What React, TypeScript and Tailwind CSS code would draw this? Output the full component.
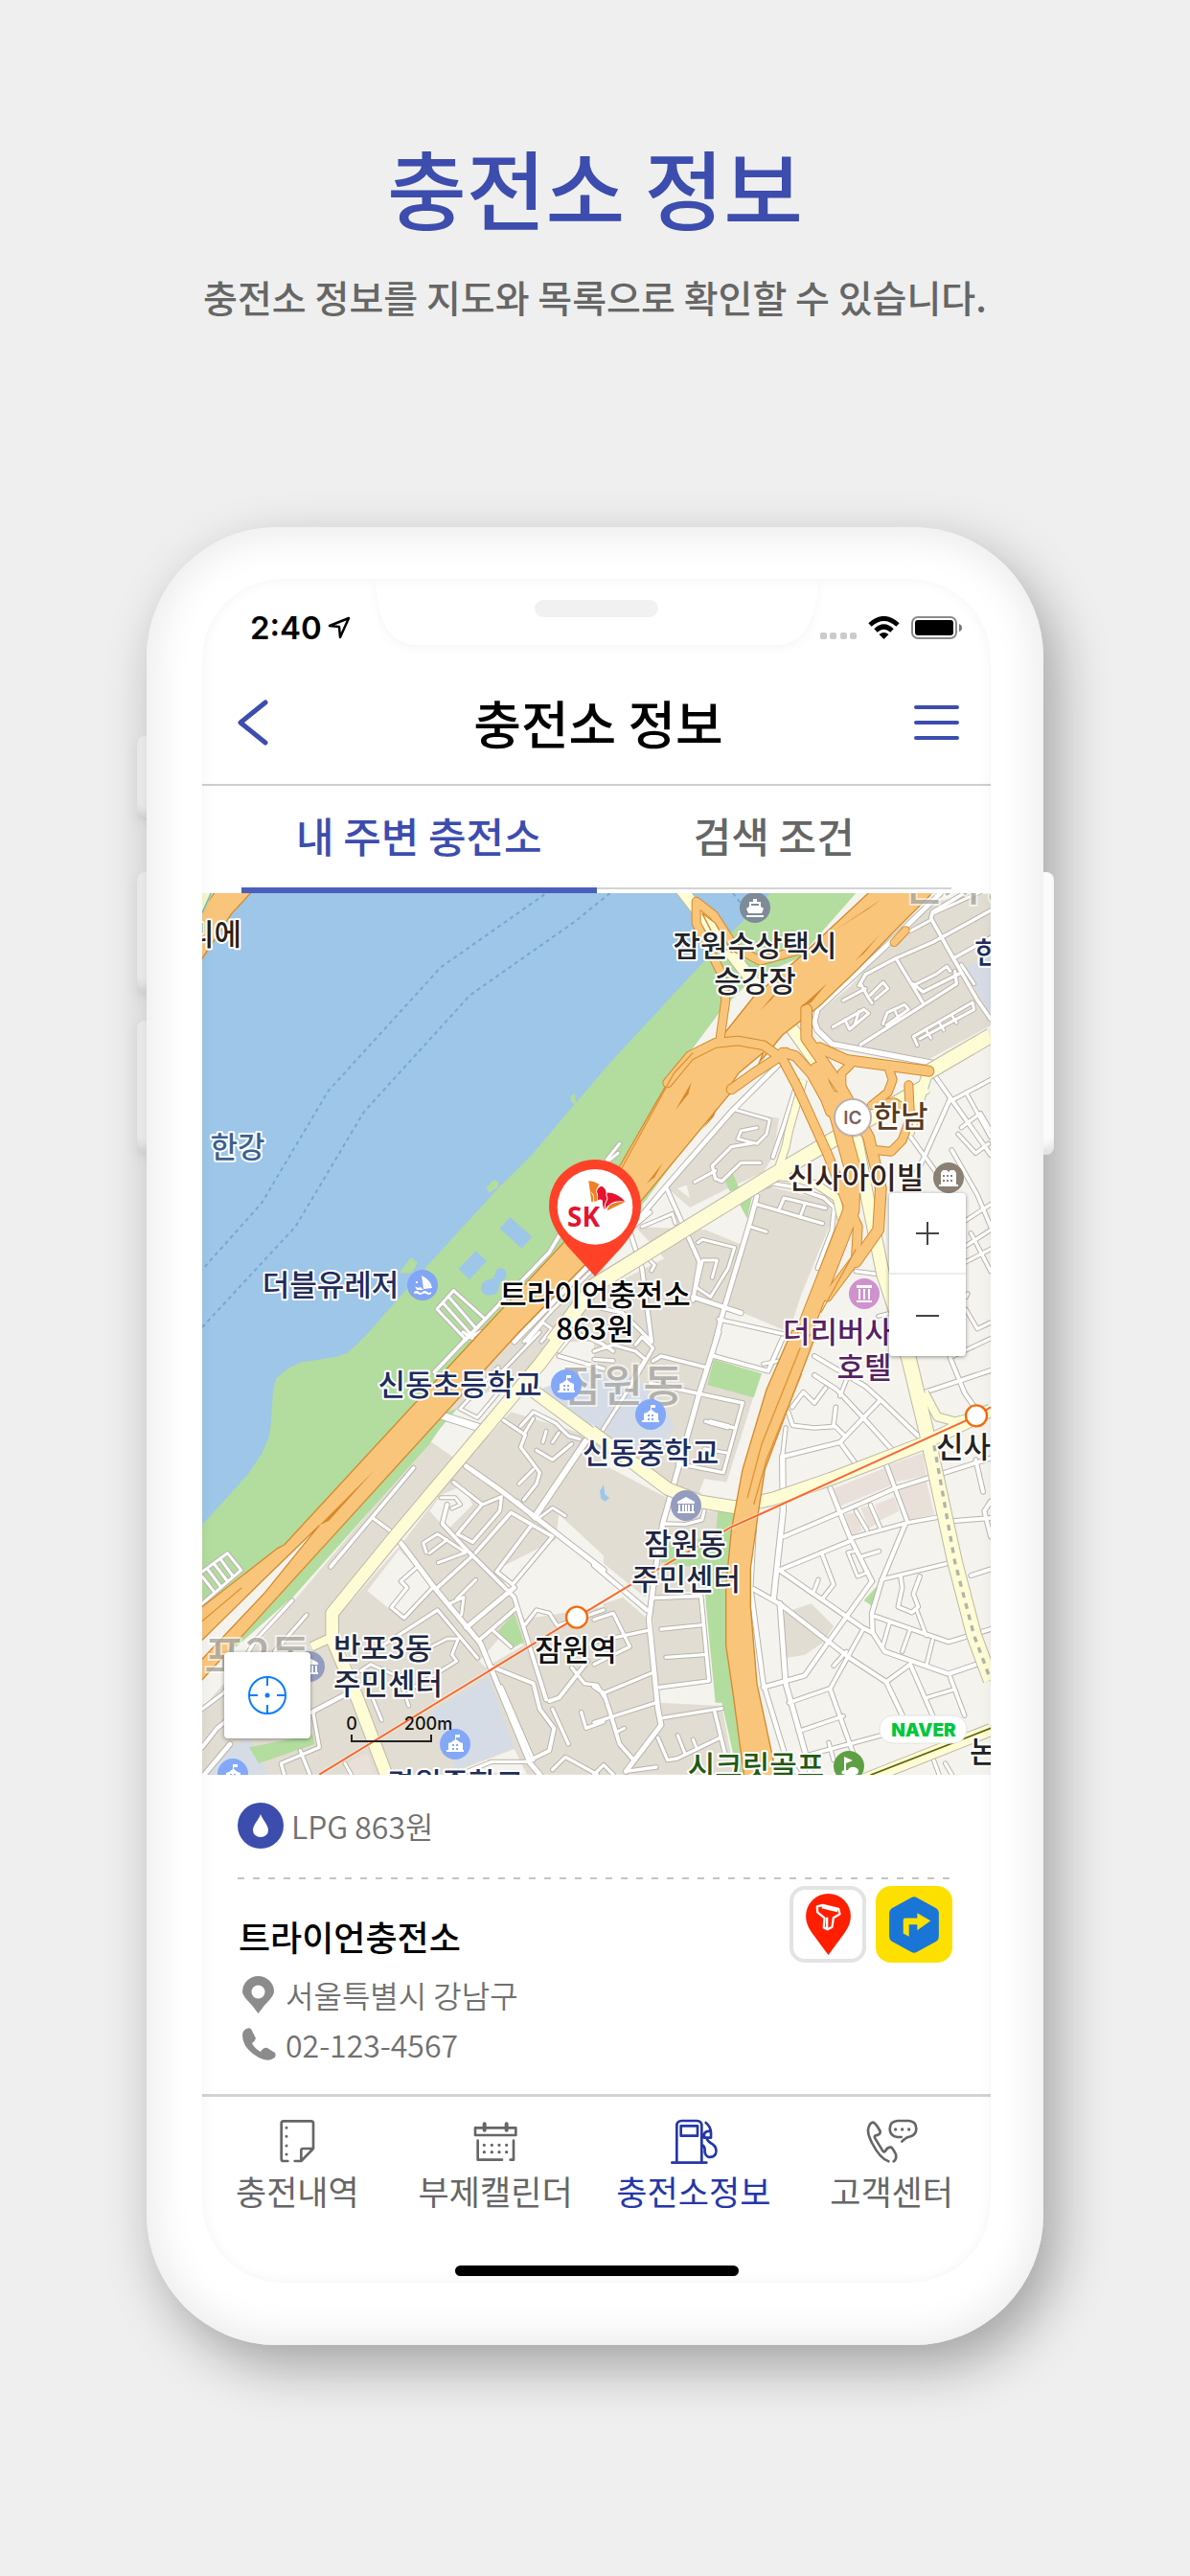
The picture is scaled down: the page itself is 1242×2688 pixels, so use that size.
import type { ReactNode } from 'react'

type Road = [points: string, width: number]

// The map sheet is drawn in four tiles, three units to a pixel.
const TILES = { nw: [0, 0], ne: [1260, 0], sw: [0, 1410], se: [1260, 1410] } as const
type Tile = keyof typeof TILES

const blocks: Record<Tile, string[]> = {
  nw: ['1225,1210 1290,1150 1290,1440 1000,1440'],
  ne: [
    '980,130 1080,60 1242,36 1242,450 1050,555 750,500 695,450 690,420 800,330',
    '440,720 580,740 560,860 530,910 420,960 300,1020 230,960',
    '130,1080 350,1090 460,1135 370,1440 0,1440 0,1290 220,1180',
    '530,950 740,1000 740,1070 650,1290 610,1410 420,1330 490,1050',
  ],
  sw: [
    '745,340 830,400 640,620 420,880 420,950 300,1030 150,1180 33,1260 33,1180 330,830',
    '1025,0 1200,0 1090,100 830,240 800,250',
    '860,400 1000,250 1230,320 1290,330 1290,1385 620,1385 450,900 660,660',
    '33,1180 430,950 620,1385 33,1385',
  ],
  se: [
    '0,0 390,0 370,90 520,130 500,200 415,470 345,460 330,520 230,520 160,440 0,300',
    '0,400 230,520 200,720 160,830 0,700',
    '180,830 340,830 360,1090 200,1120',
    '200,600 300,590 350,560 400,560 380,800 180,830',
    '0,860 90,830 170,900 200,1160 400,1170 440,1385 0,1385',
    '590,880 680,850 750,920 720,970 660,1010 600,1020',
  ],
}

const patches: Record<Tile, string[]> = {
  nw: [],
  ne: ['260,960 290,950 300,990', '350,1090 470,1030 490,1060 460,1135'],
  sw: [
    '550,810 650,680 760,800 660,900',
    '745,560 780,510 850,480 880,540 800,620',
    '1150,570 1290,700 1290,860 1030,900 960,740 1140,650',
    '900,1030 980,940 1040,980 920,1050',
    '1100,90 1190,80 1290,120 1060,190',
    '830,1375 1010,1305 1050,1385',
  ],
  se: ['0,680 30,700 0,730', '345,460 415,470 440,520 330,500'],
}

const schools: Record<Tile, string[]> = {
  nw: [],
  ne: ['1160,270 1242,230 1242,420'],
  sw: ['1090,180 1290,100 1290,290 1230,290', '750,1190 930,1080 1010,1300 830,1370', '100,1310 180,1270 240,1385 50,1385'],
  se: ['0,140 130,140 255,290 200,370 50,350 0,300'],
}

const parks: Record<Tile, string[]> = {
  nw: [],
  ne: ['405,925 435,915 455,960 425,970', '450,1000 495,985 480,1055'],
  sw: [
    '800,265 785,290 745,350 310,838 290,830 780,270',
    '1010,880 1040,970 1005,990 960,935',
    '180,1300 380,1260 385,1290 210,1350',
  ],
  se: [
    '375,85 525,130 500,205 355,165',
    '388,560 450,570 430,780 430,980 440,1130 500,1385 450,1385 400,1160 380,1160 350,850 345,740 210,720 230,660 380,640',
    '845,840 895,785 875,860',
  ],
}

const malls = [
  '750,490 910,425 930,480 770,545',
  '925,415 1030,378 1040,450 940,470',
  '785,570 820,565 840,620 805,640',
  '835,550 860,545 885,600 860,615',
  '880,540 940,515 955,560 895,590',
  '955,490 1040,465 1065,570 980,590',
]

const streets: Record<Tile, Road[]> = {
  nw: [
    ['820,1280 768,1338 860,1435', 9],
    ['820,1280 920,1370', 9],
    ['804,1298 892,1400', 9],
    ['786,1318 876,1418', 9],
    ['1150,1110 1120,1160 900,1390 850,1440', 11],
    ['1235,1210 1010,1440', 14],
    ['1260,1210 1130,1340 1040,1440', 9],
    ['1050,1440 1100,1380 1128,1400 1095,1440', 9],
  ],
  ne: [
    ['690,440 700,465 745,508 1060,568', 16],
    ['690,440 700,400 830,280 900,215 1085,36', 14],
    ['40,870 80,820', 9],
    ['0,910 75,850', 9],
    ['990,155 1055,120', 9],
    ['1160,36 1060,95 1055,115 1125,240 1200,370 1242,430', 11],
    ['1060,100 1242,18', 9],
    ['945,240 1030,380', 10],
    ['830,325 850,290 945,240 1060,190 1242,90', 10],
    ['1125,240 1242,175', 10],
    ['1000,320 1030,345 1150,285', 10],
    ['1010,320 1070,290 1105,265 1115,280', 9],
    ['780,372 850,335', 9],
    ['835,320 860,365 870,380', 9],
    ['1130,280 1135,320 1040,380 835,510', 10],
    ['1150,260 1190,320', 9],
    ['865,355 905,315 920,335 880,368', 9],
    ['748,455 845,400 860,412 800,462 785,432', 9],
    ['905,445 918,410 972,385 985,400 915,450', 9],
    ['830,405 815,450', 8],
    ['940,400 955,430', 8],
    ['1012,512 1000,485 1185,378 1190,400 1020,492', 9],
    ['1040,465 1055,490', 8],
    ['1080,440 1095,465', 8],
    ['1120,418 1135,442', 8],
    ['575,575 430,720 225,955 145,1050', 14],
    ['630,650 595,760 560,862', 11],
    ['445,715 550,745 540,790 510,820 450,805 460,780 510,770', 9],
    ['500,818 430,830 370,890 380,930 400,938 460,880 520,880', 10],
    ['315,940 380,905', 9],
    ['225,955 330,1190 310,1310', 12],
    ['325,1130 340,1120 440,1145 420,1210 365,1300 320,1270 340,1185 385,1185 370,1240', 9],
    ['175,1035 110,1090 150,1210 180,1440', 12],
    ['150,1080 245,1040', 9],
    ['245,1040 255,1070', 9],
    ['165,1175 190,1200 180,1218', 9],
    ['510,985 490,1060 400,1360 380,1440', 14],
    ['510,1010 715,1070', 10],
    ['580,1025 595,990 725,1022', 10],
    ['645,1050 660,1010', 9],
    ['490,1080 540,1096', 9],
    ['520,960 560,945 620,955 720,990 752,1020 745,1090 700,1210', 11],
    ['310,1300 460,1350', 14],
    ['390,1370 590,1415', 11],
    ['820,1220 900,1230', 10],
    ['1065,605 1242,855', 12],
    ['1115,680 1030,870 960,1010', 12],
    ['985,790 1075,915', 11],
    ['1110,690 1242,620', 11],
    ['1165,660 1242,800', 10],
    ['1150,770 1210,725 1242,780', 10],
    ['1140,790 1195,850 1235,820', 10],
    ['1120,840 1200,980 1242,1080', 11],
    ['1165,1140 1242,1090', 10],
    ['1165,1060 1242,1010', 10],
    ['1180,1100 1242,1220', 10],
    ['1165,1190 1242,1150', 10],
    ['1165,1340 1200,1400 1242,1380', 10],
    ['1165,1300 1170,1290', 10],
    ['0,1330 90,1350 180,1440', 10],
    ['890,1360 930,1350', 9],
  ],
  sw: [
    ['905,0 860,20 760,125', 11],
    ['850,0 880,20', 10],
    ['1090,0 975,120 940,150', 9],
    ['960,110 840,240 895,268 985,160', 9],
    ['1150,75 1290,115', 11],
    ['1150,60 1200,0 1290,40', 9],
    ['785,262 910,302', 22],
    ['695,425 435,735', 11],
    ['565,580 635,632', 10],
    ['860,420 960,490 1290,745', 15],
    ['655,660 760,800 905,975 1060,1350 1090,1385', 15],
    ['820,470 910,540 970,515 965,560 880,658 832,632 905,545', 10],
    ['780,518 825,518 842,540 815,552', 9],
    ['800,540 785,600 850,670 950,770 1010,830 1110,1150', 12],
    ['1120,1155 1150,1145 1240,1030', 12],
    ['890,690 1000,565 1130,640 1005,790 955,750 1060,610', 11],
    ['1080,570 1235,340', 18],
    ['1020,530 1075,585', 10],
    ['975,275 1045,322 1030,360 1090,440 1080,475 1040,525', 10],
    ['1025,475 1070,430', 9],
    ['1030,295 1070,250 1140,285 1180,325 1215,335', 10],
    ['1040,320 1070,270', 9],
    ['1080,370 1130,400 1190,350', 10],
    ['1110,310 1100,345', 9],
    ['1150,315 1130,345', 9],
    ['1090,580 1130,550 1170,575', 9],
    ['770,800 880,700', 11],
    ['700,740 655,780 675,800 625,862 665,895 755,800', 10],
    ['735,690 725,660 770,632 858,690 772,722', 9],
    ['745,692 800,650', 9],
    ['860,925 1010,800', 14],
    ['830,835 890,775', 9],
    ['808,850 852,830 845,885', 9],
    ['900,965 1015,865', 11],
    ['600,980 770,870 895,1020', 10],
    ['530,1060 560,1040 650,1080 680,1170', 9],
    ['740,990 800,960 835,960 815,1010 830,1030 700,1110', 9],
    ['945,1050 1070,1100 1090,1180 1135,1240 1120,1310 1050,1345', 12],
    ['970,1110 1070,1340', 10],
    ['1045,915 1080,870 1120,880 1145,920 1290,870', 10],
    ['945,935 1000,985', 10],
    ['1130,1180 1180,1290', 10],
    ['1220,1190 1235,1240 1290,1220', 10],
    ['1190,1050 1230,1100 1270,1105 1290,1140', 10],
    ['1130,1370 1170,1330 1270,1385', 10],
    ['840,1385 940,1345 1050,1345', 10],
    ['560,1130 595,1215', 9],
    ['315,840 200,965 100,1130 33,1180', 10],
    ['360,885 260,1000', 10],
    ['33,1300 80,1240 130,1200', 12],
    ['40,1385 120,1290', 14],
    ['375,1190 490,1130', 13],
    ['380,1190 400,1300 280,1350 290,1385', 10],
    ['340,1310 370,1385', 10],
    ['480,1350 500,1385', 9],
    ['33,750 112,692 155,745 33,850', 9],
    ['90,710 130,765', 9],
    ['70,725 112,780', 9],
    ['50,742 92,798', 9],
    ['33,765 72,815', 9],
  ],
  se: [
    ['0,60 60,40 130,60 160,85 120,150', 10],
    ['0,85 60,90', 10],
    ['0,20 60,60', 10],
    ['130,40 150,15 185,50 120,160 28,305', 10],
    ['185,90 210,75 350,110', 11],
    ['175,160 465,222', 11],
    ['375,75 545,122 590,20', 12],
    ['530,100 580,90', 9],
    ['390,0 330,190 260,440 215,600 190,760 172,900 200,1180 210,1230 100,1375', 15],
    ['465,222 405,440 262,412', 10],
    ['350,280 440,300', 11],
    ['365,282 418,296', 16],
    ['345,365 415,378', 9],
    ['345,560 338,588 285,602 225,600', 10],
    ['0,730 165,870', 13],
    ['210,930 340,917', 10],
    ['225,1018 345,1010', 10],
    ['185,832 335,826 360,1092 205,1112', 11],
    ['0,900 60,880 112,985 0,1040', 10],
    ['0,970 165,935', 10],
    ['0,1110 30,1130 50,1190 80,1290 120,1335', 12],
    ['30,1130 180,1068', 10],
    ['0,1222 195,1160', 10],
    ['75,1250 95,1240', 9],
    ['215,1208 400,1178', 10],
    ['378,1190 410,1320', 11],
    ['200,1270 230,1340 260,1335 395,1270', 10],
    ['262,1262 285,1320', 9],
    ['310,1275 320,1300', 9],
    ['100,1375 195,1362', 10],
    ['0,1385 30,1355 60,1385', 10],
    ['620,235 655,188 690,222 725,175', 11],
    ['690,135 760,180 840,265 930,365', 12],
    ['690,75 850,170 900,215 1020,330', 12],
    ['770,200 790,150', 10],
    ['608,250 622,292 690,300 755,295 785,325', 11],
    ['757,235 750,290', 11],
    ['590,390 770,345 895,215', 12],
    ['770,345 825,420', 12],
    ['600,300 590,390', 10],
    ['1030,190 1242,120', 12],
    ['1115,80 1160,190 1195,240', 12],
    ['1125,75 1242,20', 10],
    ['590,390 592,560 562,835', 16],
    ['595,640 770,565 940,490 1242,395', 12],
    ['740,490 800,640 870,780', 13],
    ['915,415 980,590', 12],
    ['820,560 855,620', 10],
    ['865,540 895,610', 10],
    ['805,645 980,597 1100,575', 11],
    ['580,745 800,655', 12],
    ['580,745 840,925 870,940', 13],
    ['500,805 580,850 800,1020 915,1095 970,1210', 13],
    ['975,600 900,780 870,880 872,940 910,1000 1110,1070 1242,1025', 13],
    ['900,775 1115,722', 11],
    ['870,780 730,975 660,1075 530,1112', 13],
    ['712,690 750,790 715,835', 11],
    ['685,820 702,775', 10],
    ['822,685 795,690 825,765 850,755', 9],
    ['840,702 892,686', 11],
    ['960,765 965,800 952,860 995,878 1015,860 1000,820 1020,765', 11],
    ['880,890 1110,970 1242,930', 12],
    ['925,910 905,980', 10],
    ['990,930 965,1000', 10],
    ['1060,965 1040,1045', 10],
    ['1010,870 1040,950', 10],
    ['582,850 600,1100 640,1240 680,1385', 15],
    ['500,620 490,800 530,1100 600,1330 640,1385', 13],
    ['610,1160 740,1115 840,935', 11],
    ['640,1250 780,1202', 11],
    ['740,1120 830,1370', 12],
    ['915,1095 990,1040 1060,1200', 12],
    ['750,1045 790,1000', 10],
    ['1115,1080 1160,1200', 11],
    ['1040,1145 1130,1118', 10],
    ['1120,592 1242,582', 12],
    ['1180,762 1242,742', 12],
    ['1195,400 1218,500', 12],
    ['1242,530 1222,560 1242,640', 12],
    ['650,1330 900,1262', 11],
    ['735,1285 750,1340', 10],
    ['1060,1330 1080,1385', 10],
    ['1100,1350 1120,1385', 10],
  ],
}

const avenues: Record<Tile, Road[]> = {
  nw: [],
  ne: [
    ['-130,1440 0,1265 290,1085 550,925 770,795 1040,640', 44],
    ['1040,600 1242,482', 44],
    ['1050,580 985,790', 30],
    ['655,620 610,780 600,830 570,920', 22],
    ['270,20 480,290 620,460 720,600 760,680', 36],
    ['560,920 640,930 700,950 760,990 775,1060', 22],
    ['820,800 860,1010 905,1230 975,1440', 38],
  ],
  sw: [
    ['1180,-20 1090,100 640,635 440,880 440,960 520,1150 615,1400', 38],
    ['1050,170 1260,325', 38],
    ['375,985 440,955', 26],
  ],
  se: [
    ['-10,310 110,400 230,490 330,530 440,548 560,522 740,460 1040,345 1242,245', 38],
    ['960,20 985,80 1045,330 1130,720 1190,950 1242,1090', 44],
    ['1035,190 1075,265 1130,280 1170,270', 24],
    ['850,1400 1242,1245', 36],
  ],
}

const ramps: Road[] = [
  ['395,490 412,370 400,290 320,130 320,62 375,105 440,205 520,248 640,215', 24],
  ['430,650 500,600 600,535', 28],
  ['590,535 630,545 680,600 725,680 740,720', 28],
  ['700,590 715,640 760,720 810,900 805,1030 770,1120 660,1400', 48],
  ['665,400 665,490 770,640 860,800 898,960 890,1090 820,1190', 32],
  ['705,520 790,558 1048,593', 30],
  ['800,575 775,600 775,650', 24],
  ['925,590 935,620 920,660 870,700', 24],
  ['985,637 990,740 965,810 930,845 880,840', 24],
  ['870,700 940,690 985,720', 22],
  ['940,190 975,153', 22],
  ['755,670 800,700', 24],
  ['230,630 300,545 380,505 450,498 530,512 590,555 635,640 730,850 790,1000 826,1080 820,1180 730,1300', 26],
]

const ink = '#1f2640'
const schoolInk = '#1d2d5e'

const labels: { text: string; x: number; y: number; fill: string; anchor?: 'start' | 'end' }[] = [
  { text: '잠원수상택시', x: 577, y: 66, fill: '#1f2328' },
  { text: '승강장', x: 577, y: 103, fill: '#1f2328' },
  { text: '리에', x: 41, y: 54, fill: '#2b1e14', anchor: 'end' },
  { text: '한강', x: 37, y: 276, fill: '#3a6190' },
  { text: '더블유레저', x: 134, y: 420, fill: '#222c5c' },
  { text: '한남', x: 729, y: 244, fill: '#5a3a1e' },
  { text: '신사아이빌', x: 682, y: 308, fill: '#33221a' },
  { text: '더리버사이드', x: 606, y: 469, fill: '#55215f', anchor: 'start' },
  { text: '호텔', x: 691, y: 506, fill: '#55215f' },
  { text: '한', x: 806, y: 73, fill: schoolInk, anchor: 'start' },
  { text: '신동초등학교', x: 269, y: 524, fill: schoolInk },
  { text: '신동중학교', x: 468, y: 595, fill: schoolInk },
  { text: '잠원동', x: 504, y: 690, fill: ink },
  { text: '주민센터', x: 505, y: 727, fill: ink },
  { text: '신사', x: 766, y: 589, fill: '#222222', anchor: 'start' },
  { text: '잠원역', x: 390, y: 801, fill: '#111111' },
  { text: '반포3동', x: 137, y: 799, fill: ink, anchor: 'start' },
  { text: '주민센터', x: 137, y: 836, fill: ink, anchor: 'start' },
  { text: '경원중학교', x: 264, y: 940, fill: schoolInk },
  { text: '시크릿골프', x: 578, y: 922, fill: '#1f5a12' },
  { text: '논', x: 801, y: 907, fill: '#222222', anchor: 'start' },
  { text: '트라이언충전소', x: 410, y: 430, fill: '#000000' },
  { text: '863원', x: 410, y: 466, fill: '#000000' },
]

function Areas({ shapes, fill }: { shapes: Record<Tile, string[]>; fill: string }) {
  return (
    <>
      {(Object.keys(TILES) as Tile[]).map((tile) => (
        <g key={tile} transform={`translate(${TILES[tile][0]} ${TILES[tile][1]})`} fill={fill}>
          {shapes[tile].map((points) => (
            <polygon key={points} points={points} />
          ))}
        </g>
      ))}
    </>
  )
}

function Roads({
  roads,
  fill,
  edge,
  cap = 'round',
}: {
  roads: Partial<Record<Tile, Road[]>>
  fill: string
  edge: string
  cap?: 'round' | 'butt'
}) {
  const pass = (stroke: string, extra: number) =>
    (Object.keys(roads) as Tile[]).map((tile) => (
      <g
        key={tile + stroke}
        transform={`translate(${TILES[tile][0]} ${TILES[tile][1]})`}
        fill="none"
        stroke={stroke}
        strokeLinecap={cap}
        strokeLinejoin="round"
      >
        {roads[tile]?.map(([points, width]) => (
          <polyline key={points} points={points} strokeWidth={width + extra} />
        ))}
      </g>
    ))

  return (
    <>
      {pass(edge, 6)}
      {pass(fill, 0)}
    </>
  )
}

function Poi({ x, y, color, children }: { x: number; y: number; color: string; children: ReactNode }) {
  return (
    <g transform={`translate(${x} ${y})`}>
      <circle r="16" fill={color} />
      <g fill="#fff">{children}</g>
    </g>
  )
}

function School() {
  return <path d="M-9 8h18v-2h-1v-7l-3-1-4-3v-2h4v-3h-5v5l-4 3-3 1v7h-2zM-3 0h2v2h-2zm4 0h2v2h-2zM-3 4h2v2h-2zm4 0h2v2h-2z" fillRule="evenodd" />
}

function Bank() {
  return <path d="M0-9l9 5v2H-9v-2zM-8-1h2v7h-2zm4 0h2v7h-2zm3 0h2v7h-2zm3 0h2v7H2zm4 0h2v7H6zM-9 6H9v2H-9z" />
}

function SkPin() {
  return (
    <g>
      <path d="M1263 870a144 144 0 0 1 144 144c0 52-28 90-60 130l-84 91-84-91c-32-40-60-78-60-130a144 144 0 0 1 144-144z" fill="#ff4128" />
      <circle cx="1263" cy="1018" r="118" fill="#fff" />
      <g transform="translate(1080 840)">
        <path d="M163 96Q182 98 197 108Q186 120 187 131Q193 146 189 160L172 163Z" fill="#f08023" />
        <path d="M170 132Q182 140 178 162" fill="none" stroke="#fff" strokeWidth="3" />
        <path d="M203 113Q216 118 218 134Q250 132 277 161Q232 154 214 188Q205 176 207 158Q196 150 190 160Q196 144 189 131Q190 118 203 113Z" fill="#e4132f" />
        <path d="M277 163L221 190Q224 172 240 167Q256 160 277 163Z" fill="#f08023" />
        <path d="M214 190Q210 172 222 152Q216 140 220 133" fill="none" stroke="#fff" strokeWidth="3" />
      </g>
    </g>
  )
}

function StationMap() {
  return (
    <svg viewBox="0 0 823 920" className="block h-auto w-full" role="img" aria-label="내 주변 충전소 지도">
      <g transform="scale(0.333333) translate(-33 -36)">
        <rect x="33" y="36" width="2469" height="2760" fill="#9dc6e9" />
        <g fill="none" stroke="#74a8d2" strokeWidth="6" strokeDasharray="12 12">
          <polyline points="1105,40 780,268 428,655 220,1005 33,1215" />
          <polyline points="1310,36 1200,125 872,355 540,720 325,1080 33,1395" />
          <polyline points="1695,36 1725,75" />
        </g>
        <polygon
          points="1812,36 1655,195 1330,545 1200,695 1070,850 960,960 740,1200 555,1410 520,1445 488,1475 450,1488 340,1505 300,1525 265,1555 255,1590 248,1700 243,1735 220,1790 180,1850 100,1940 33,2012 33,2796 2502,2796 2502,36"
          fill="#b3dc9f"
        />
        <g fill="#b3dc9f">
          <polygon points="1185,672 1200,662 1204,700 1190,690" />
          <polygon points="922,958 946,934 962,940 958,958 932,974" />
          <polygon points="650,1225 686,1176 708,1192 690,1225" />
        </g>
        <g fill="#9dc6e9">
          <polygon points="997,1050 1066,1112 1034,1148 965,1086" />
          <polygon points="890,1156 924,1188 870,1246 836,1212" />
          <path d="M968 1210c20 0 24 28 6 38-14 6-10 20-14 32-8 20-54 22-54-8 0-16 14-26 34-28 14-4 6-34 28-34z" />
        </g>
        <polygon points="2080,36 2502,36 2502,2796 33,2796 33,2490 315,2240 745,1750 1040,1410 1420,1000 1640,700 1860,480" fill="#f4f3ee" />
        <polygon points="1660,400 1760,300 1900,240 2080,36 2200,36 1900,500 1540,560" fill="#f4f3ee" />

        <Areas shapes={blocks} fill="#e1ddd2" />
        <Areas shapes={patches} fill="#f4f3ee" />
        <Areas shapes={schools} fill="#d5dce6" />
        <Areas shapes={parks} fill="#b3dc9f" />
        <Areas shapes={{ nw: [], ne: [], sw: ['500,1340 550,1320 570,1385 480,1385'], se: malls }} fill="#eae0da" />
        <path d="M1290 1888l-12 20 4 24 14 8 12-12-14-10z" fill="#9dc6e9" />

        <Roads roads={streets} fill="#ffffff" edge="#b9b4ac" />
        <Roads roads={avenues} fill="#fefcd4" edge="#bdb8a6" cap="butt" />
        <polyline points="2325,1765 2390,2130 2450,2360 2502,2500" fill="none" stroke="#b3b2ab" strokeWidth="10" strokeDasharray="18 18" />
        <polyline points="2125,2797 2502,2650" fill="none" stroke="#5e6400" strokeWidth="5" />

        {/* riverside expressway */}
        <g fill="#f9c57a" stroke="#d58a2c" strokeWidth="4" strokeLinejoin="round">
          <polygon points="75,30 190,30 125,100 27,250 27,95" />
          <polygon points="27,2275 270,2086 290,2076 905,1410 1165,1130 1335,900 1455,690 1525,570 1600,510 1660,485 1760,360 1900,240 2125,30 2325,30 2200,155 2090,270 1965,390 1850,480 1800,540 1680,670 1407,1000 1290,1140 1025,1410 27,2505" />
          <polygon points="1880,1405 1800,1590 1725,1840 1690,2030 1673,2210 1673,2390 1695,2540 1730,2800 1832,2800 1770,2510 1750,2270 1750,2150 1775,1970 1795,1840 1870,1640 1960,1405" />
        </g>
        <polygon points="33,100 33,36 66,36" fill="#f6f7cf" />
        <path d="M33 98l28-62" stroke="#6cc3b0" strokeWidth="5" />
        <polygon points="27,2380 220,2190 400,2015 230,2225 27,2440" fill="#f4f3ee" stroke="#d58a2c" strokeWidth="4" />
        <polygon points="1683,645 1712,600 1790,535 1770,585 1700,635" fill="#f4f3ee" stroke="#d58a2c" strokeWidth="4" />
        <Roads roads={{ ne: ramps }} fill="#f9c57a" edge="#d58a2c" />
        <g fill="none" stroke="#df9436" strokeWidth="4">
          <path d="M1345 900L1510 600l60-65M27 2320l130-110M1740 1930l45-170 120-300M1760 1950l40-140 110-270M1970 1350l110-200" />
        </g>
        <g fill="#d58a2c">
          <polygon points="1515,715 1565,628 1555,665" />
          <polygon points="1780,403 1870,300 1815,370" />
          <polygon points="1905,395 1990,318 1940,378" />
          <polygon points="2010,155 2160,55 2120,85" />
          <polygon points="2078,247 2155,165 2105,225" />
          <polygon points="1600,775 1645,707 1635,735" />
          <polygon points="1425,945 1475,880 1450,925" />
          <polygon points="400,2015 570,1845 430,2000" />
        </g>
        <polygon points="1598,98 1640,130 1690,220 1650,200" fill="#fefcd4" stroke="#d58a2c" strokeWidth="4" />
        <polyline points="400,2795 1206,2303 1360,2210 1690,2020 1780,1980 2457,1672 2502,1645" fill="none" stroke="#fff" strokeWidth="12" opacity="0.5" />
        <polyline points="400,2795 1206,2303 1360,2210 1690,2020 1780,1980 2457,1672 2502,1645" fill="none" stroke="#fb6a2c" strokeWidth="6" />
        <g fill="#fff" stroke="#f56b0a" strokeWidth="7">
          <circle cx="1206" cy="2303" r="33" />
          <circle cx="2457" cy="1672" r="33" />
        </g>
      </g>

      <g className="font-medium" fontSize="46" textAnchor="middle" fill="#8f8c86" fillOpacity="0.65" stroke="#fff" strokeOpacity="0.6" strokeWidth="4" paintOrder="stroke">
        <text x="439" y="530">잠원동</text>
        <text x="794" y="7">신사동</text>
        <text x="58" y="812">포2동</text>
      </g>

      <Poi x={577} y={15} color="#7f8a99">
        <path d="M-2-9h4v3h4v5l3 2-2 5H-7l-2-5 3-2v-5h4zM-9 8H9v2H-9zM-4-4v2h8v-2z" fillRule="evenodd" />
      </Poi>
      <Poi x={230} y={409} color="#82a5f5">
        <path d="M-1-10Q9-5 10 3L1 4zM-8 1q3 3 6 1l3 3h-7zM-7-4h2v2h-2zM-9 7q3-2 5 0 2 2 4 0 2-2 5 0 2 2 4 0v2q-3 2-5 0-2-1-4 0-3 2-5 0-2-1-4 0z" />
      </Poi>
      <Poi x={779} y={297} color="#8b8074">
        <path d="M-10 7h2v-12l2-3h4l2 2 2-2h4l2 3V7h2v2h-20zM-6-3v2h2v-2zm4 0v2h2v-2zm4 0v2h2v-2zM-6 2v2h2V2zm4 0v2h2V2zm4 0v2h2V2z" fillRule="evenodd" />
      </Poi>
      <Poi x={691} y={418} color="#cf92cd">
        <path d="M-8-9H8v3H-8zM-6-5h2V6h-2zm5 0h2V6h-2zm5 0h2V6H4zM-8 7H8v2H-8z" />
      </Poi>
      <Poi x={380} y={513} color="#84a8f8"><School /></Poi>
      <Poi x={468} y={544} color="#84a8f8"><School /></Poi>
      <Poi x={264} y={888} color="#84a8f8"><School /></Poi>
      <Poi x={32} y={919} color="#84a8f8"><School /></Poi>
      <Poi x={505} y={639} color="#949cbf"><Bank /></Poi>
      <Poi x={112} y={807} color="#949cbf"><Bank /></Poi>
      <Poi x={675} y={911} color="#5da043">
        <path d="M-5-10l9 4-7 3V4h2q2-4 7-3 6 2 3 7-6 3-16 0-2-3 2-4z" />
      </Poi>
      <circle cx="679" cy="234" r="19" fill="#fff" stroke="#bfb1ae" strokeWidth="2" />
      <text x="679" y="241" textAnchor="middle" fontSize="19" fill="#7a6059" className="font-[Inter] font-semibold">IC</text>

      <g className="font-medium" fontSize="31" stroke="#fff" strokeWidth="4" strokeLinejoin="round" paintOrder="stroke">
        {labels.map(({ text, x, y, fill, anchor = 'middle' }) => (
          <text key={`${text}-${y}`} x={x} y={y} fill={fill} textAnchor={anchor}>
            {text}
          </text>
        ))}
      </g>

      <g transform="scale(0.333333) translate(-33 -36)">
        <SkPin />
      </g>
      <text x="381" y="348" fontSize="28" fill="#e4132f" className="font-['Noto_Sans'] font-bold">SK</text>

      <g fontSize="18" textAnchor="middle" fill="#111" className="font-[Inter] font-medium">
        <text x="156" y="873">0</text>
        <text x="236" y="873">200m</text>
      </g>
      <path d="M156 878v7h83v-7" fill="none" stroke="#222" strokeWidth="2" />

      <rect x="707" y="858" width="91" height="29" rx="14" fill="#fff" stroke="#e3e3e3" />
      <text x="753" y="880" textAnchor="middle" fontSize="19" fill="#00c73c" className="font-[Inter] font-black">NAVER</text>
    </svg>
  )
}

function StatusBar() {
  return (
    <div className="flex h-[86px] items-start justify-between pt-[35px] pr-[29px] pl-[50px]">
      <div className="flex h-8 items-center gap-1.5">
        <span className="font-[Inter] text-[33px] leading-8 font-semibold">2:40</span>
        <svg viewBox="0 0 24 24" className="size-6" fill="none" stroke="#000" strokeWidth="2.500" strokeLinejoin="round">
          <path d="M2 10L22 2l-9 20-1-11z" />
        </svg>
      </div>
      <div className="flex h-8 items-center gap-3">
        <svg viewBox="0 0 38 24" className="h-6 w-[38px]" fill="#cbcbcb">
          <rect x="0" y="17" width="7" height="7" rx="2" />
          <rect x="10" y="17" width="7" height="7" rx="2" />
          <rect x="21" y="17" width="7" height="7" rx="2" />
          <rect x="31" y="17" width="7" height="7" rx="2" />
        </svg>
        <svg viewBox="0 0 33 24" className="h-6 w-[33px]" fill="none" stroke="#000" strokeWidth="5">
          <path d="M2 9Q16.500-4 31 9M8 15q8.500-8 17 0" />
          <path d="M16.500 24l-5-5q5-4 10 0z" fill="#000" stroke="none" />
        </svg>
        <svg viewBox="0 0 54 24" className="h-6 w-[54px]">
          <rect x="1" y="1" width="46" height="22" rx="6" fill="none" stroke="#8a8a8a" strokeWidth="2" />
          <rect x="4" y="4" width="40" height="16" rx="3" fill="#000" />
          <path d="M50 8q3 1 3 4t-3 4z" fill="#777" />
        </svg>
      </div>
    </div>
  )
}

function Notch() {
  return (
    <div className="pointer-events-none absolute inset-x-0 top-0 flex justify-center">
      <svg viewBox="0 0 500 90" className="h-[90px] w-[500px] drop-shadow-[0_3px_5px_rgba(0,0,0,0.04)]">
        <path d="M16-10L18 0C22 18 20 69 64 69H436C480 69 478 18 482 0L484-10z" fill="#fff" />
        <rect x="185" y="22" width="129" height="18" rx="9" fill="#f1f1f1" />
      </svg>
    </div>
  )
}

function MapControls() {
  return (
    <>
      <div className="absolute top-[313px] right-[26px] flex w-20 flex-col rounded bg-white shadow-[0_1px_4px_rgba(0,0,0,0.4)]">
        <button type="button" aria-label="확대" className="flex h-[85px] items-center justify-center border-b-2 border-[#ececec]">
          <svg viewBox="0 0 24 24" className="size-6" stroke="#444" strokeWidth="2">
            <path d="M0 12h24M12 0v24" />
          </svg>
        </button>
        <button type="button" aria-label="축소" className="flex h-[85px] items-center justify-center">
          <svg viewBox="0 0 24 24" className="size-6" stroke="#444" strokeWidth="2">
            <path d="M0 12h24" />
          </svg>
        </button>
      </div>
      <button
        type="button"
        aria-label="현재 위치"
        className="absolute bottom-[38px] left-[23px] flex size-[90px] items-center justify-center rounded bg-white shadow-[0_1px_4px_rgba(0,0,0,0.4)]"
      >
        <svg viewBox="0 0 40 40" className="size-10" fill="none" stroke="#0a7dff" strokeWidth="2">
          <circle cx="20" cy="20" r="19" />
          <path d="M20 1v9M20 30v9M1 20h9M30 20h9" />
          <circle cx="20" cy="20" r="2.500" fill="#0a7dff" stroke="none" />
        </svg>
      </button>
    </>
  )
}

function StationCard() {
  return (
    <section className="pt-[29px] pr-10 pb-8 pl-[37px] text-[32px] leading-10 font-[350] text-[#707070]">
      <div className="flex h-12 items-center gap-2">
        <svg viewBox="0 0 48 48" className="size-12">
          <circle cx="24" cy="24" r="24" fill="#3c4dae" />
          <path d="M24 12c2 6 8 11 8 17a8 7 0 0 1-16 0c0-6 6-11 8-17z" fill="#fff" />
        </svg>
        <span>LPG 863원</span>
      </div>
      <div className="mt-[30px] h-0.5 bg-[repeating-linear-gradient(90deg,#c4c4c4_0_7px,transparent_7px_16px)]" />
      <div className="mt-[7px] flex justify-between">
        <div className="pt-7 pl-px">
          <h2 className="text-[36px] leading-12 font-medium text-black">트라이언충전소</h2>
          <p className="mt-[17px] flex items-center gap-3 pl-1">
            <svg viewBox="0 0 33 39" className="h-[39px] w-[33px]" fill="#8c8c8c" fillRule="evenodd">
              <path d="M16.500 39Q11 31 4 24Q0 19 0 16a16.500 16 0 0 1 33 0q0 3-4 8Q22 31 16.500 39zM16.500 9.500a7 7 0 1 0 0 14 7 7 0 1 0 0-14z" />
            </svg>
            서울특별시 강남구
          </p>
          <p className="mt-3 flex items-center gap-2.5 pl-1">
            <svg viewBox="0 0 35 34" className="h-[34px] w-[35px]" fill="#8c8c8c">
              <path d="M4 1Q9-1 10 3L14 11Q13 14 10 16Q13 22 19 25Q22 20 26 21L34 26Q36 30 32 32Q27 36 17 31Q0 21 0 8Q0 3 4 1Z" />
            </svg>
            02-123-4567
          </p>
        </div>
        <div className="flex gap-2.5">
          <button type="button" aria-label="T map 길안내" className="flex size-20 items-center justify-center rounded-2xl border-4 border-[#e3e3e3] bg-white">
            <svg viewBox="0 0 140 192" className="h-16 w-[47px]">
              <path d="M70 0a70 70 0 0 1 70 72c0 22-12 42-24 58L70 192 24 130C12 114 0 94 0 72A70 70 0 0 1 70 0z" fill="#ff1e00" />
              <path
                d="M35 40L52 36 102 48 106 64 86 76 82 104 68 112 56 106 58 76 36 58zM66 74L66 108M50 42L98 54"
                fill="none"
                stroke="#fff"
                strokeWidth="7"
                strokeLinejoin="round"
              />
            </svg>
          </button>
          <button type="button" aria-label="카카오내비 길안내" className="flex size-20 items-center justify-center rounded-2xl bg-[#fee000]">
            <svg viewBox="0 0 156 178" className="h-[59px] w-[52px]">
              <path d="M70 3q8-5 16 0l62 34q8 5 8 14v76q0 9-8 14l-62 34q-8 5-16 0L8 141q-8-5-8-14V51q0-9 8-14z" fill="#1976d6" />
              <path d="M44 116V74q0-6 6-6H88V52L130 76 88 106V88H62v38z" fill="#fee000" />
            </svg>
          </button>
        </div>
      </div>
    </section>
  )
}

const navItems: { label: string; active?: boolean; icon: ReactNode }[] = [
  {
    label: '충전내역',
    icon: (
      <>
        <path d="M46 135H33Q26 135 26 128V17Q26 10 33 10H119Q126 10 126 17V96L88 135H68M88 135V102Q88 96 94 96H126" />
        <path d="M42 31v0M42 58v0M42 87v0M42 114v0" strokeWidth="9" />
      </>
    ),
  },
  {
    label: '부제캘린더',
    icon: (
      <>
        <path d="M12 31H139V54H12zM20 71V131H96M122 131H132V71" />
        <path d="M41 19V38M110 19V38" strokeWidth="12" />
        <path d="M40 85v0M64 85v0M87 85v0M110 85v0M40 107v0M64 107v0M87 107v0M110 107v0" strokeWidth="10" />
      </>
    ),
  },
  {
    label: '충전소정보',
    active: true,
    icon: (
      <path d="M7 140H115M22 140V25Q22 9 38 9H85Q100 9 100 25V140M35 25H87V56H35zM113 15Q129 28 129 46V62H108V50Q112 40 127 42M116 64Q118 74 134 82Q150 94 144 112Q136 126 120 122Q108 116 110 98Q108 86 101 84" />
    ),
  },
  {
    label: '고객센터',
    icon: (
      <>
        <path d="M64 136Q38 128 12 78Q-4 46 1 32Q6 14 16 14Q24 16 38 42Q40 52 24 55Q18 57 22 64L46 103Q52 110 55 102Q62 90 72 92Q78 96 87 114Q90 130 80 136M104 60H92Q68 58 68 34Q68 11 92 9H128Q151 11 151 34Q151 56 126 60Q118 62 106 74" />
        <path d="M86 36v0M107 36v0M128 36v0" strokeWidth="10" />
      </>
    ),
  },
]

function BottomNav() {
  return (
    <nav className="-ml-1 grid grid-cols-4 border-t-[3px] border-[#d3d3d3] pt-[22px]">
      {navItems.map(({ label, active, icon }) => (
        <a
          key={label}
          href="#"
          aria-current={active ? 'page' : undefined}
          className={`flex flex-col items-center gap-1.5 text-[35px] leading-10 whitespace-nowrap ${active ? 'text-[#2437a8]' : 'text-[#666666]'}`}
        >
          <svg viewBox="0 0 150 150" className="size-[50px] overflow-visible" fill="none" stroke="currentColor" strokeWidth="8" strokeLinecap="round" strokeLinejoin="round">
            {icon}
          </svg>
          {label}
        </a>
      ))}
    </nav>
  )
}

export default function App() {
  return (
    <main className="min-h-screen bg-[#efefef] pt-[139px] pb-20 font-['Noto_Sans_CJK_KR',sans-serif] text-black">
      <h1 className="text-center text-[90px] leading-[110px] font-medium text-[#3c4dae]">충전소 정보</h1>
      <p className="mt-[30px] text-center text-[39px] leading-[60px] font-medium text-[#666666]">
        충전소 정보를 지도와 목록으로 확인할 수 있습니다.
      </p>

      <div className="relative mx-auto mt-[211px] w-full max-w-[936px]">
        <div className="absolute top-[218px] -left-2.5 h-[88px] w-5 rounded-lg bg-[#fbfbfb] shadow-[inset_0_-12px_10px_-4px_rgba(0,0,0,0.1),-4px_4px_12px_rgba(0,0,0,0.04)]" />
        <div className="absolute top-[360px] -left-2.5 h-[128px] w-5 rounded-lg bg-[#fbfbfb] shadow-[inset_0_-12px_10px_-4px_rgba(0,0,0,0.1),-4px_4px_12px_rgba(0,0,0,0.04)]" />
        <div className="absolute top-[515px] -left-2.5 h-[140px] w-5 rounded-lg bg-[#fbfbfb] shadow-[inset_0_-12px_10px_-4px_rgba(0,0,0,0.1),-4px_4px_12px_rgba(0,0,0,0.04)]" />
        <div className="relative rounded-[136px] shadow-[14px_22px_56px_rgba(0,0,0,0.32)]">
          <div className="absolute top-[360px] -right-[11px] h-[295px] w-5 rounded-lg bg-[#fbfbfb] shadow-[inset_0_-12px_10px_-4px_rgba(0,0,0,0.1)]" />
          <div className="relative rounded-[136px] bg-white pt-[54px] pr-[55px] pb-[65px] pl-[58px] shadow-[inset_0_0_36px_12px_rgba(0,0,0,0.07)]">
            <div className="relative overflow-hidden rounded-[84px] bg-white">
              <StatusBar />
              <header className="flex h-[130px] items-center justify-between border-b-2 border-[#cfcfcf] pr-[33px] pl-[37px]">
                <button type="button" aria-label="뒤로" className="w-[47px]">
                  <svg viewBox="0 0 32 48" className="h-12 w-8" fill="none" stroke="#3c4dae" strokeWidth="5" strokeLinecap="round" strokeLinejoin="round">
                    <path d="M29 3L3 24l26 21" />
                  </svg>
                </button>
                <h2 className="text-[54px] leading-[64px] font-medium">충전소 정보</h2>
                <button type="button" aria-label="메뉴">
                  <svg viewBox="0 0 47 36" className="h-9 w-[47px]" stroke="#3c4dae" strokeWidth="4" strokeLinecap="round">
                    <path d="M2 2h43M2 18h43M2 34h43" />
                  </svg>
                </button>
              </header>
              <div role="tablist" className="grid grid-cols-2 items-start px-[41px] text-[43px] font-medium">
                <button type="button" role="tab" aria-selected="true" className="h-28 border-b-[6px] border-[#4a5fbc] pb-1 text-[#3c4dae]">
                  내 주변 충전소
                </button>
                <button type="button" role="tab" aria-selected="false" className="h-[108px] border-b-2 border-[#d3d3d3] pb-1 text-[#666666]">
                  검색 조건
                </button>
              </div>
              <div className="relative">
                <StationMap />
                <MapControls />
              </div>
              <StationCard />
              <BottomNav />
              <div className="mx-auto mt-[58px] mb-[7px] h-[11px] w-[296px] rounded-full bg-black" />
              <Notch />
              <div className="pointer-events-none absolute inset-0 rounded-[84px] shadow-[inset_0_0_14px_rgba(0,0,0,0.05)]" />
            </div>
          </div>
        </div>
      </div>
    </main>
  )
}
